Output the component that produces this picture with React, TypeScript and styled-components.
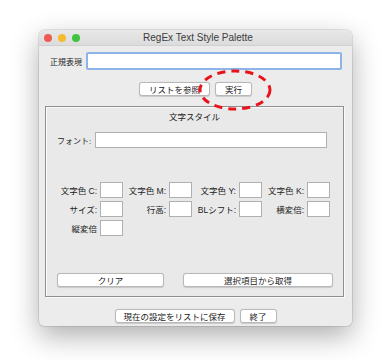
import React from "react";
import styled, { createGlobalStyle } from "styled-components";

const Global = createGlobalStyle`
  html, body {
    margin: 0;
    padding: 0;
    background: #ffffff;
  }
  body {
    font-family: "Liberation Sans", "Noto Sans CJK JP", sans-serif;
  }
`;

const Page = styled.div`
  width: 392px;
  height: 360px;
  padding: 30px 0 0 39px;
  box-sizing: border-box;
  position: relative;
  overflow: hidden;
`;

const Window = styled.div`
  width: 313px;
  height: 296px;
  background: #ececec;
  border-radius: 5px;
  box-shadow: 0 10px 28px rgba(0, 0, 0, 0.32), 0 0 0 0.5px rgba(0, 0, 0, 0.18);
  display: flex;
  flex-direction: column;
  overflow: hidden;
  font-family: "Liberation Sans", "Noto Sans CJK JP", sans-serif;
  font-size: 8.5px;
  color: #222;
`;

const TitleBar = styled.div`
  height: 16px;
  flex: none;
  display: flex;
  align-items: center;
  position: relative;
  background: linear-gradient(#e8e8e8, #dcdcdc);
  border-bottom: 1px solid #d0d0d0;
  box-sizing: border-box;
`;

const Lights = styled.div`
  display: flex;
  gap: 6px;
  padding-left: 5px;
`;

const Light = styled.span<{ $c: string }>`
  width: 8px;
  height: 8px;
  border-radius: 50%;
  background: ${(p) => p.$c};
`;

const Title = styled.div`
  flex: 1;
  text-align: center;
  font-size: 10px;
  color: #3c3c3c;
  margin-left: -36px;
`;

const RegexRow = styled.div`
  display: flex;
  align-items: center;
  gap: 4px;
  margin: 6px 10px 0 11px;
`;

const Label = styled.span`
  white-space: nowrap;
  font-size: 8px;
  color: #222;
`;

const RegexInput = styled.div`
  flex: 1;
  height: 18px;
  box-sizing: border-box;
  background: #fff;
  border: 2px solid #8db4e8;
  border-radius: 2px;
`;

const ButtonRow = styled.div<{ $mt: number }>`
  display: flex;
  justify-content: center;
  gap: 5px;
  margin-top: ${(p) => p.$mt}px;
`;

const Button = styled.div<{ $w: number }>`
  width: ${(p) => p.$w}px;
  height: 14px;
  box-sizing: border-box;
  background: #fff;
  border: 1px solid #b8b8b8;
  border-radius: 3px;
  box-shadow: 0 0.5px 1px rgba(0, 0, 0, 0.15);
  display: flex;
  align-items: center;
  justify-content: center;
  font-size: 8.5px;
  color: #222;
  white-space: nowrap;
`;

const Group = styled.div`
  margin: 10px 8px 0 6px;
  height: 191px;
  box-sizing: border-box;
  border: 1px solid #8f8f8f;
  box-shadow: inset 1px 1px 0 #fafafa, 1px 1px 0 #fafafa;
  background: #e9e9e9;
  display: flex;
  flex-direction: column;
  padding: 4px 0 0 0;
`;

const GroupTitle = styled.div`
  text-align: center;
  height: 12px;
  line-height: 12px;
  font-size: 8.5px;
`;

const FontRow = styled.div`
  display: flex;
  align-items: center;
  gap: 4px;
  margin: 9px 16px 0 11px;
`;

const Field = styled.div<{ $w?: number }>`
  ${(p) => (p.$w ? `width: ${p.$w}px;` : "flex: 1;")}
  height: 16px;
  box-sizing: border-box;
  background: #fff;
  border: 1px solid #b0b0b0;
`;

const Grid = styled.div`
  display: grid;
  grid-template-columns: 45px 23px 46px 23px 47px 23px 45px 23px;
  grid-auto-rows: 16px;
  row-gap: 3px;
  margin: 34px 0 0 9px;
`;

const GridLabel = styled.span`
  display: flex;
  align-items: center;
  justify-content: flex-end;
  padding-right: 3px;
  white-space: nowrap;
  font-size: 8.5px;
`;

const GroupButtons = styled.div`
  display: flex;
  justify-content: space-between;
  margin: auto 10px 9px 11px;
`;

const Mark = styled.svg`
  position: absolute;
  left: 196px;
  top: 67px;
  pointer-events: none;
`;

const colorFields = ["文字色 C:", "文字色 M:", "文字色 Y:", "文字色 K:"];
const sizeFields = ["サイズ:", "行高:", "BLシフト:", "横変倍:"];

export default function App() {
  return (
    <>
      <Global />
      <Page>
        <Window>
          <TitleBar>
            <Lights>
              <Light $c="#ee5b54" />
              <Light $c="#f6bb2f" />
              <Light $c="#3fc43f" />
            </Lights>
            <Title>RegEx Text Style Palette</Title>
          </TitleBar>

          <RegexRow>
            <Label>正規表現</Label>
            <RegexInput />
          </RegexRow>

          <ButtonRow $mt={12}>
            <Button $w={71}>リストを参照</Button>
            <Button $w={37}>実行</Button>
          </ButtonRow>

          <Group>
            <GroupTitle>文字スタイル</GroupTitle>
            <FontRow>
              <Label>フォント:</Label>
              <Field />
            </FontRow>

            <Grid>
              {colorFields.map((l) => (
                <React.Fragment key={l}>
                  <GridLabel>{l}</GridLabel>
                  <Field />
                </React.Fragment>
              ))}
              {sizeFields.map((l) => (
                <React.Fragment key={l}>
                  <GridLabel>{l}</GridLabel>
                  <Field />
                </React.Fragment>
              ))}
              <GridLabel>縦変倍</GridLabel>
              <Field />
            </Grid>

            <GroupButtons>
              <Button $w={107}>クリア</Button>
              <Button $w={150}>選択項目から取得</Button>
            </GroupButtons>
          </Group>

          <ButtonRow $mt={12}>
            <Button $w={120}>現在の設定をリストに保存</Button>
            <Button $w={37}>終了</Button>
          </ButtonRow>
        </Window>

        <Mark width="78" height="46" viewBox="0 0 78 46">
          <ellipse
            cx="39"
            cy="23"
            rx="35"
            ry="19"
            fill="none"
            stroke="#e8141c"
            strokeWidth="3"
            strokeDasharray="8 6"
          />
        </Mark>
      </Page>
    </>
  );
}
